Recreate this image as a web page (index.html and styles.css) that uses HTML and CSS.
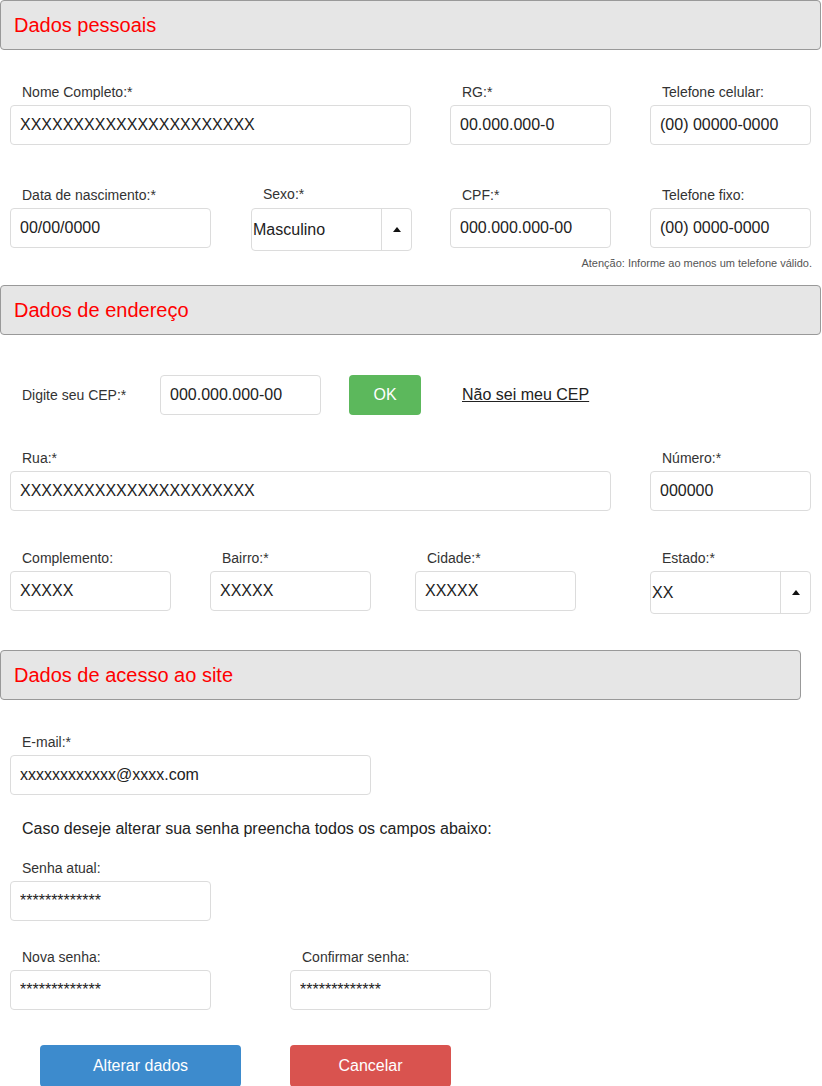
FILE: index.html
```html
<!DOCTYPE html>
<html lang="pt-BR">
<head>
<meta charset="utf-8">
<title>Meus dados</title>
<link rel="stylesheet" href="styles.css">
</head>
<body>
<div class="page">
  <div class="panel-head"><h2>Dados pessoais</h2></div>

  <div class="row row-1">
    <div class="field"><label>Nome Completo:*</label><input class="inp w400" type="text" value="XXXXXXXXXXXXXXXXXXXXXX"></div>
    <div class="field"><label>RG:*</label><input class="inp w160" type="text" value="00.000.000-0"></div>
    <div class="field"><label>Telefone celular:</label><input class="inp w160" type="text" value="(00) 00000-0000"></div>
  </div>

  <div class="row row-2">
    <div class="field"><label>Data de nascimento:*</label><input class="inp w200" type="text" value="00/00/0000"></div>
    <div class="field shift1"><label>Sexo:*</label>
      <div class="select w160"><span class="sel-text">Masculino</span><span class="sel-arrow"><i class="tri"></i></span></div>
    </div>
    <div class="field"><label>CPF:*</label><input class="inp w160" type="text" value="000.000.000-00"></div>
    <div class="field"><label>Telefone fixo:</label><input class="inp w160" type="text" value="(00) 0000-0000"></div>
  </div>
  <p class="note">Atenção: Informe ao menos um telefone válido.</p>

  <div class="panel-head"><h2>Dados de endereço</h2></div>

  <div class="cep-row">
    <span class="cep-label">Digite seu CEP:*</span>
    <input class="inp w160" type="text" value="000.000.000-00">
    <button class="btn btn-ok">OK</button>
    <a class="cep-link" href="#">Não sei meu CEP</a>
  </div>

  <div class="row row-rua">
    <div class="field"><label>Rua:*</label><input class="inp w600" type="text" value="XXXXXXXXXXXXXXXXXXXXXX"></div>
    <div class="field"><label>Número:*</label><input class="inp w160" type="text" value="000000"></div>
  </div>

  <div class="row row-addr">
    <div class="field"><label>Complemento:</label><input class="inp w160" type="text" value="XXXXX"></div>
    <div class="field"><label>Bairro:*</label><input class="inp w160" type="text" value="XXXXX"></div>
    <div class="field"><label>Cidade:*</label><input class="inp w160" type="text" value="XXXXX"></div>
    <div class="field"><label>Estado:*</label>
      <div class="select w160"><span class="sel-text">XX</span><span class="sel-arrow"><i class="tri"></i></span></div>
    </div>
  </div>

  <div class="panel-head narrow"><h2>Dados de acesso ao site</h2></div>

  <div class="row row-email">
    <div class="field"><label>E-mail:*</label><input class="inp w360" type="text" value="xxxxxxxxxxxx@xxxx.com"></div>
  </div>

  <p class="hint">Caso deseje alterar sua senha preencha todos os campos abaixo:</p>

  <div class="row row-senha">
    <div class="field"><label>Senha atual:</label><input class="inp w200 pass" type="text" value="*************"></div>
  </div>

  <div class="row row-nova">
    <div class="field"><label>Nova senha:</label><input class="inp w200 pass" type="text" value="*************"></div>
    <div class="field"><label>Confirmar senha:</label><input class="inp w200 pass" type="text" value="*************"></div>
  </div>

  <div class="actions">
    <button class="btn btn-primary">Alterar dados</button>
    <button class="btn btn-danger">Cancelar</button>
  </div>
</div>
</body>
</html>
```

FILE: styles.css
```css
* { box-sizing: border-box; }

html, body {
  margin: 0;
  padding: 0;
  background: #fff;
}

body {
  font-family: "Liberation Sans", Arial, sans-serif;
  color: #333;
}

.page {
  width: 822px;
  padding-bottom: 40px;
}

.panel-head {
  width: 821px;
  height: 50px;
  background: #e6e6e6;
  border: 1px solid #999;
  border-radius: 4px;
  display: flex;
  align-items: center;
  padding-left: 13px;
}

.panel-head.narrow { width: 801px; margin-top: 36px; }

.panel-head h2 {
  margin: 0;
  font-weight: normal;
  font-size: 20px;
  color: #ff0000;
  line-height: 24px;
}

.row {
  display: grid;
  padding-left: 10px;
  align-items: start;
}

.row-1 { margin-top: 34px; grid-template-columns: 440px 200px 161px; }
.row-2 { margin-top: 42px; grid-template-columns: 240px 200px 200px 161px; }
.row-rua { margin-top: 35px; grid-template-columns: 640px 161px; }
.row-addr { margin-top: 39px; grid-template-columns: 200px 205px 235px 161px; }
.row-email { margin-top: 34px; grid-template-columns: 361px; }
.row-senha { margin-top: 22px; grid-template-columns: 201px; }
.row-nova { margin-top: 28px; grid-template-columns: 280px 201px; }

.field {
  display: flex;
  flex-direction: column;
}

.field.shift1 { padding-left: 1px; margin-top: -1px; }
.field.shift1 label { margin-bottom: 5px; }

.field label {
  font-size: 14px;
  line-height: 17px;
  color: #333;
  padding-left: 12px;
  margin-bottom: 4px;
}

.inp {
  height: 40px;
  border: 1px solid #dcdcdc;
  border-radius: 4px;
  padding: 0 9px;
  font-family: "Liberation Sans", Arial, sans-serif;
  font-size: 16px;
  color: #222;
  background: #fff;
  outline: none;
}

.w160 { width: 161px; }
.w200 { width: 201px; }
.w360 { width: 361px; }
.w400 { width: 401px; }
.w600 { width: 601px; }

.select {
  height: 43px;
  border: 1px solid #dcdcdc;
  border-radius: 4px;
  display: flex;
  align-items: stretch;
  background: #fff;
}

.sel-text {
  flex: 1;
  display: flex;
  align-items: center;
  padding-left: 1px;
  font-size: 16px;
  color: #222;
}

.sel-arrow {
  width: 30px;
  border-left: 1px solid #dcdcdc;
  display: flex;
  align-items: center;
  justify-content: center;
}

.tri {
  display: block;
  width: 0;
  height: 0;
  border-left: 4px solid transparent;
  border-right: 4px solid transparent;
  border-bottom: 5px solid #111;
  margin-left: 1px;
}

.note {
  margin: 6px 10px 15px 0;
  text-align: right;
  font-size: 11px;
  line-height: 13px;
  color: #555;
}

.cep-row {
  display: flex;
  align-items: center;
  margin-top: 40px;
  padding-left: 22px;
}

.cep-label {
  font-size: 14px;
  color: #333;
  width: 138px;
}

.btn {
  border: none;
  border-radius: 4px;
  color: #fff;
  font-family: "Liberation Sans", Arial, sans-serif;
  font-size: 16px;
  cursor: pointer;
}

.btn-ok {
  width: 72px;
  height: 40px;
  background: #5cb85c;
  margin-left: 28px;
}

.cep-link {
  margin-left: 41px;
  font-size: 16px;
  color: #222;
  text-decoration: underline;
}

.hint {
  margin: 24px 0 0 22px;
  font-size: 16px;
  line-height: 19px;
  color: #222;
}

.actions {
  display: flex;
  margin-top: 35px;
  padding-left: 40px;
  gap: 49px;
}

.btn-primary {
  width: 201px;
  height: 42px;
  background: #3d8bcd;
}

.btn-danger {
  width: 161px;
  height: 42px;
  background: #d9534f;
}
```
